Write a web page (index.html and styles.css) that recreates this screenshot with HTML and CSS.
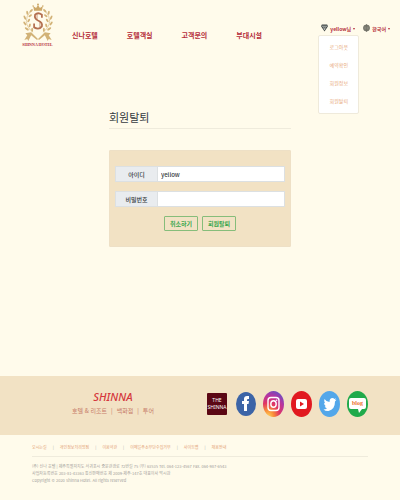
FILE: index.html
```html
<!DOCTYPE html>
<html lang="ko">
<head>
<meta charset="utf-8">
<meta name="viewport" content="width=device-width, initial-scale=1">
<title>회원탈퇴</title>
<link rel="stylesheet" href="styles.css">
</head>
<body>
<header class="header">
  <a class="logo" href="#">
    <svg class="crest" viewBox="0 0 32 40" aria-hidden="true">
      <g fill="#cda868">
        <path d="M12 8 11 3l3 2 2-3 2 3 3-2-1 5z"/>
        <circle cx="16" cy="1.5" r="1"/><circle cx="11" cy="3" r=".8"/><circle cx="21" cy="3" r=".8"/>
      </g>
      <g id="branch" fill="#d2b277">
        <path d="M8 9q-4 4-4 10 1 7 7 11" fill="none" stroke="#d2b277" stroke-width=".6"/>
        <ellipse cx="9" cy="8" rx="1" ry="2.2" transform="rotate(45 9 8)"/>
        <ellipse cx="5" cy="10" rx="1" ry="2.2" transform="rotate(-10 5 10)"/>
        <ellipse cx="8" cy="13" rx="1" ry="2" transform="rotate(55 8 13)"/>
        <ellipse cx="2.500" cy="15" rx="1" ry="2.3" transform="rotate(-25 2.5 15)"/>
        <ellipse cx="6.500" cy="18" rx="1" ry="2" transform="rotate(35 6.5 18)"/>
        <ellipse cx="2.500" cy="21" rx="1" ry="2.3" transform="rotate(-35 2.5 21)"/>
        <ellipse cx="7.500" cy="23" rx="1" ry="2" transform="rotate(15 7.5 23)"/>
        <ellipse cx="4.500" cy="26.500" rx="1" ry="2.4" transform="rotate(-55 4.5 26.5)"/>
        <ellipse cx="10" cy="27.500" rx="1" ry="2"/>
        <path d="M3 31l6-1 7 7-1 1-6-5-3 6-1-2-3 1 3-5z"/>
      </g>
      <use href="#branch" transform="matrix(-1 0 0 1 32 0)"/>
      <path d="M20 15v-3q-4-3-7 0-1 4 3 6 5 2 4 6-3 4-8 1v-4" fill="none" stroke="#b46f50" stroke-width="1.800"/>
      <path d="M15 11v6M18 19v6" stroke="#b46f50" stroke-width=".7"/>
    </svg>
    <span class="logo-name">SHINNA HOTEL</span>
  </a>
  <nav class="nav" aria-label="주 메뉴">
    <a href="#">신나호텔</a><a href="#">호텔객실</a><a href="#">고객문의</a><a href="#">부대시설</a>
  </nav>
  <div class="account">
    <div class="user">
      <button class="toggle" type="button" aria-expanded="true">
        <svg class="gem" viewBox="0 0 8 8" aria-hidden="true"><path d="M1 0h6l1 2-4 6-4-6z" fill="#454b4b"/><path d="M1 2h6M3 3l1 3 1-3" fill="none" stroke="#d8dcd7" stroke-width=".8"/></svg>
        <span class="user-name">yellow님</span><span class="caret"></span>
      </button>
      <div class="menu">
        <a href="#">로그아웃</a><a href="#">예약확인</a><a href="#">회원정보</a><a href="#">회원탈퇴</a>
      </div>
    </div>
    <button class="toggle" type="button">
      <svg class="globe" viewBox="0 0 8 8" aria-hidden="true"><circle cx="4" cy="4" r="3.6" fill="#9c9c90" stroke="#65655d" stroke-width=".6"/><path d="M0 4h8M4 0v8M1 2h6M1 6h6M4 0q-4 4 0 8 4-4 0-8" fill="none" stroke="#5d5d56" stroke-width=".5"/></svg>
      <span class="language">한국어</span><span class="caret"></span>
    </button>
  </div>
</header>

<main class="main">
  <h1 class="title">회원탈퇴</h1>
  <form class="card">
    <div class="field"><label for="user-id">아이디</label><input id="user-id" type="text" value="yellow"></div>
    <div class="field"><label for="password">비밀번호</label><input id="password" type="password"></div>
    <div class="actions">
      <button class="btn" type="button">취소하기</button>
      <button class="btn" type="submit">회원탈퇴</button>
    </div>
  </form>
</main>

<footer class="footer">
  <div class="band">
    <div class="brand">
      <a class="brand-name" href="#">SHINNA</a>
      <div class="brand-links"><a href="#">호텔 &amp; 리조트</a><span>|</span><a href="#">백화점</a><span>|</span><a href="#">투어</a></div>
    </div>
    <div class="social">
      <a class="tile" href="#"><span>THE</span><span>SHINNA</span></a>
      <a href="#" aria-label="Facebook"><svg class="icon small" viewBox="0 0 20 24"><ellipse cx="10" cy="12" rx="10" ry="12" fill="#3c64a7"/><path d="M8 19v-7H6V9h2V7q0-3 3-3h2v3h-1q-1 0-1 1v1h2l-.5 3H11v7z" fill="#fff"/></svg></a>
      <a href="#" aria-label="Instagram"><svg class="icon" viewBox="0 0 21 26"><defs><radialGradient id="insta" cx=".25" cy="1" r="1.1"><stop offset="0" stop-color="#ffd45c"/><stop offset=".25" stop-color="#f98b38"/><stop offset=".5" stop-color="#e03563"/><stop offset=".75" stop-color="#b734a0"/><stop offset="1" stop-color="#6250c5"/></radialGradient></defs><ellipse cx="10.500" cy="13" rx="10.500" ry="13" fill="url(#insta)"/><rect x="5" y="6.500" width="11" height="13" rx="3" fill="none" stroke="#fff" stroke-width="1.4"/><ellipse cx="10.500" cy="13" rx="2.700" ry="3.300" fill="none" stroke="#fff" stroke-width="1.4"/><circle cx="13.600" cy="9.200" r=".8" fill="#fff"/></svg></a>
      <a href="#" aria-label="YouTube"><svg class="icon" viewBox="0 0 21 26"><ellipse cx="10.500" cy="13" rx="10.500" ry="13" fill="#e11920"/><rect x="5" y="8" width="11" height="10" rx="2" fill="#fff"/><path d="m9 10.500 4 2.500-4 2.500z" fill="#e11920"/></svg></a>
      <a href="#" aria-label="Twitter"><svg class="icon" viewBox="0 0 21 26"><ellipse cx="10.500" cy="13" rx="10.500" ry="13" fill="#53a7ea"/><path d="M5.500 8q2 3 5 3 0-4 3-4 1 0 2 1l1.500-.7-1 1.700 1.500-.3-1.500 1.800q0 8-6.500 9.500-3 .3-5-1.500 2 0 3.500-1.200-2-.3-2.300-2h1.200Q5 14 5 12l1 .3Q4.600 10 5.500 8" fill="#fff"/></svg></a>
      <a href="#" aria-label="Blog"><svg class="icon" viewBox="0 0 21 26"><ellipse cx="10.500" cy="13" rx="10.500" ry="13" fill="#20aa4b"/><path d="M4 7h13q2 0 2 2v7q0 2-2 2h-2l-3 4-1-4H4q-2 0-2-2V9q0-2 2-2" fill="#fff"/><text class="blog-word" x="10.500" y="14" text-anchor="middle">blog</text></svg></a>
    </div>
  </div>
  <div class="legal">
    <nav class="legal-links" aria-label="하단 메뉴"><a href="#">오시는길</a><span>|</span><a href="#">개인정보처리방침</a><span>|</span><a href="#">이용약관</a><span>|</span><a href="#">이메일주소무단수집거부</a><span>|</span><a href="#">사이트맵</a><span>|</span><a href="#">채용안내</a></nav>
    <address>
      <p>(주) 신나 호텔 | 제주특별자치도 서귀포시 중문관광로 72번길 75 (우) 63535 Tel. 064-123-4567 Fax. 064-987-6543</p>
      <p>사업자등록번호 203-81-43363 통신판매번호 제 2009-제주-147호 대표이사 박시완</p>
      <p>Copyright © 2020 Shinna Hotel. All rights reserved</p>
    </address>
  </div>
</footer>
</body>
</html>
```
FILE: styles.css
```css
* { box-sizing: border-box; }
body {
  margin: 0;
  min-height: 100vh;
  display: flex;
  flex-direction: column;
  background: #fffbeb;
  color: #343a40;
  font-family: "Noto Sans CJK KR", "Noto Sans", sans-serif;
  font-size: 6px;
}
a { color: inherit; text-decoration: none; }
button, input { font: inherit; }

.header { display: flex; align-items: flex-start; padding: 3px 10px 0 23px; color: #b52d39; }
.logo { display: flex; flex-direction: column; align-items: center; width: 29px; }
.crest { width: 32px; height: 39px; }
.logo-name { font: bold 4px/6px "Liberation Serif", serif; white-space: nowrap; color: #b52d39; }
.nav { display: flex; gap: 29px; margin: 27px 0 0 20px; font-size: 7px; line-height: 10px; font-weight: 700; white-space: nowrap; }
.account { display: flex; gap: 8px; margin: 18px 0 0 auto; }
.user { position: relative; }
.toggle { display: flex; align-items: center; gap: 2px; padding: 0; border: 0; background: none; color: #b52d39; font-size: 5px; line-height: 10px; font-weight: 700; white-space: nowrap; }
.user-name, .language { padding-top: 3px; }
.gem, .globe { width: 7px; height: 8px; }
.caret { margin-top: 3px; border: solid transparent; border-width: 2px 1px 0; border-top-color: #b52d39; }
.menu {
  position: absolute;
  top: 14px;
  left: -3px;
  display: grid;
  gap: 8px;
  width: 41px;
  padding: 6px 0 7px;
  border: 1px solid #efeadb;
  border-radius: 2px;
  background: #fff;
  color: #e8a878;
  font-size: 5px;
  line-height: 10px;
  text-align: center;
}

.main { width: 45.5%; min-width: 182px; margin: 59px auto 24px; }
.title { margin: 0 0 21px; padding-bottom: 1px; border-bottom: 1px solid #efebdc; font-size: 11px; line-height: 20px; font-weight: 400; }
.card { padding: 15px 5px; border: 1px solid #eee0c6; border-radius: 1px; background: #f2e2c4; }
.field { display: grid; grid-template-columns: 1fr 3fr; height: 16px; margin-bottom: 9px; border: 1px solid #dce0e2; background: #fff; }
.field label { display: grid; place-items: center; background: #e9ecef; border-right: 1px solid #dce0e2; font-weight: 500; }
.field input { width: 100%; min-width: 0; padding: 0 3px; border: 0; background: none; color: #343a40; font-weight: 500; }
.actions { display: flex; justify-content: center; gap: 4px; }
.btn { width: 34px; height: 15px; padding: 0; border: 1px solid #86bd7a; border-radius: 1px; background: none; color: #38a64c; font-weight: 700; line-height: 10px; }

.footer { margin-top: auto; }
.band { display: flex; align-items: center; justify-content: space-between; height: 59px; padding: 0 8% 4px 18%; background: #f2e2c4; }
.brand { display: grid; justify-items: center; white-space: nowrap; }
.brand-name { color: #d5373c; font: italic 500 11px/15px "Noto Sans", sans-serif; }
.brand-links { display: flex; gap: 4px; color: #c77b69; line-height: 14px; }
.social { display: flex; align-items: center; gap: 7px; }
.social a { display: flex; }
.social .tile { flex-direction: column; align-items: center; justify-content: center; width: 20px; height: 22px; margin-right: 2px; border-radius: 1px; background: #5b0714; color: #fff; font: 5px/7px "Noto Sans", sans-serif; }
.icon { width: 21px; height: 26px; }
.icon.small { width: 20px; height: 24px; }
.blog-word { fill: #ed7132; font: bold 6px "Liberation Serif", serif; }

.legal { padding: 8px 8% 16px; }
.legal-links { display: flex; gap: 6px; padding-bottom: 4px; border-bottom: 1px solid #efebdc; color: #dfa074; font-size: 4px; line-height: 9px; white-space: nowrap; }
.legal-links span { color: #aaa; }
address { margin-top: 6px; color: #a3a19c; font-size: 4px; line-height: 7px; font-style: normal; }
address p { margin: 0; }
```
